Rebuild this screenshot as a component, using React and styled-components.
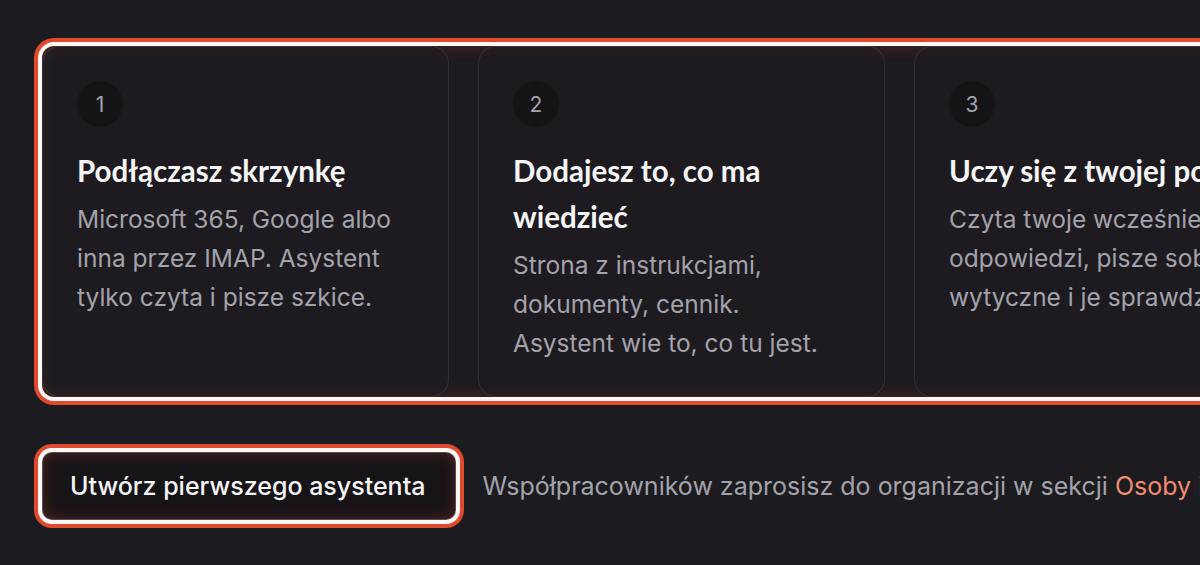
import React from 'react';
import styled, { createGlobalStyle } from 'styled-components';

const GlobalStyle = createGlobalStyle`
  html, body {
    margin: 0;
    padding: 0;
    background: #1c1b1f;
    overflow: hidden;
  }
  body {
    font-family: Inter, "Noto Sans", sans-serif;
  }
`;

const Page = styled.div`
  width: 1200px;
  height: 565px;
  padding: 46px 0 0 42px;
  box-sizing: border-box;
  background: #1c1b1f;
  overflow: hidden;
`;

const Steps = styled.div`
  display: grid;
  grid-template-columns: repeat(3, 407px);
  gap: 29px;
  width: max-content;
  border-radius: 12px;
  box-shadow: 0 0 0 4px #fdf8f6, 0 0 0 8px #e24a2f,
    inset 0 0 16px rgba(226, 74, 47, 0.28);
`;

const Card = styled.div`
  box-sizing: border-box;
  height: 351px;
  padding: 34px 34px 32px;
  border: 1px solid rgba(255, 255, 255, 0.09);
  border-radius: 18px;
  background: rgba(30, 29, 33, 0.6);
`;

const Num = styled.div`
  width: 46px;
  height: 46px;
  border-radius: 50%;
  background: #141316;
  color: #a3a3ab;
  display: flex;
  align-items: center;
  justify-content: center;
  font-size: 21px;
`;

const Title = styled.h3`
  margin: 21px 0 6px;
  font-family: Lato, "Noto Sans", sans-serif;
  font-weight: 700;
  font-size: 29.5px;
  line-height: 46px;
  color: #f5f5f6;
`;

const Line = styled.p`
  margin: 0;
  font-size: 24.5px;
  line-height: 39px;
  color: #a3a3ab;
  white-space: nowrap;
`;

const Footer = styled.div`
  display: flex;
  align-items: center;
  gap: 26px;
  margin-top: 55px;
  white-space: nowrap;
`;

const Button = styled.button`
  height: 68px;
  padding: 0 30px 0 27px;
  border: 1px solid rgba(255, 255, 255, 0.25);
  border-radius: 10px;
  background: #171418;
  color: #f5f5f6;
  font-family: Inter, sans-serif;
  font-size: 25px;
  font-weight: 500;
  box-shadow: 0 0 0 4px #fdf8f6, 0 0 0 8px #e24a2f,
    inset 0 0 14px rgba(226, 74, 47, 0.3);
`;

const Hint = styled.span`
  font-size: 25px;
  color: #a3a3ab;
`;

const Link = styled.a`
  color: #f28b72;
  text-decoration: none;
`;

const steps = [
  {
    n: 1,
    title: 'Podłączasz skrzynkę',
    lines: ['Microsoft 365, Google albo', 'inna przez IMAP. Asystent', 'tylko czyta i pisze szkice.'],
  },
  {
    n: 2,
    title: 'Dodajesz to, co ma wiedzieć',
    lines: ['Strona z instrukcjami,', 'dokumenty, cennik.', 'Asystent wie to, co tu jest.'],
  },
  {
    n: 3,
    title: 'Uczy się z twojej poczty',
    lines: ['Czyta twoje wcześniejsze', 'odpowiedzi, pisze sobie', 'wytyczne i je sprawdza.'],
  },
];

export default function App() {
  return (
    <>
      <GlobalStyle />
      <Page>
        <Steps>
          {steps.map((s) => (
            <Card key={s.n}>
              <Num>{s.n}</Num>
              <Title>{s.title}</Title>
              {s.lines.map((l) => (
                <Line key={l}>{l}</Line>
              ))}
            </Card>
          ))}
        </Steps>
        <Footer>
          <Button>Utwórz pierwszego asystenta</Button>
          <Hint>
            Współpracowników zaprosisz do organizacji w sekcji{' '}
            <Link href="#">Osoby i zespoły</Link>.
          </Hint>
        </Footer>
      </Page>
    </>
  );
}
